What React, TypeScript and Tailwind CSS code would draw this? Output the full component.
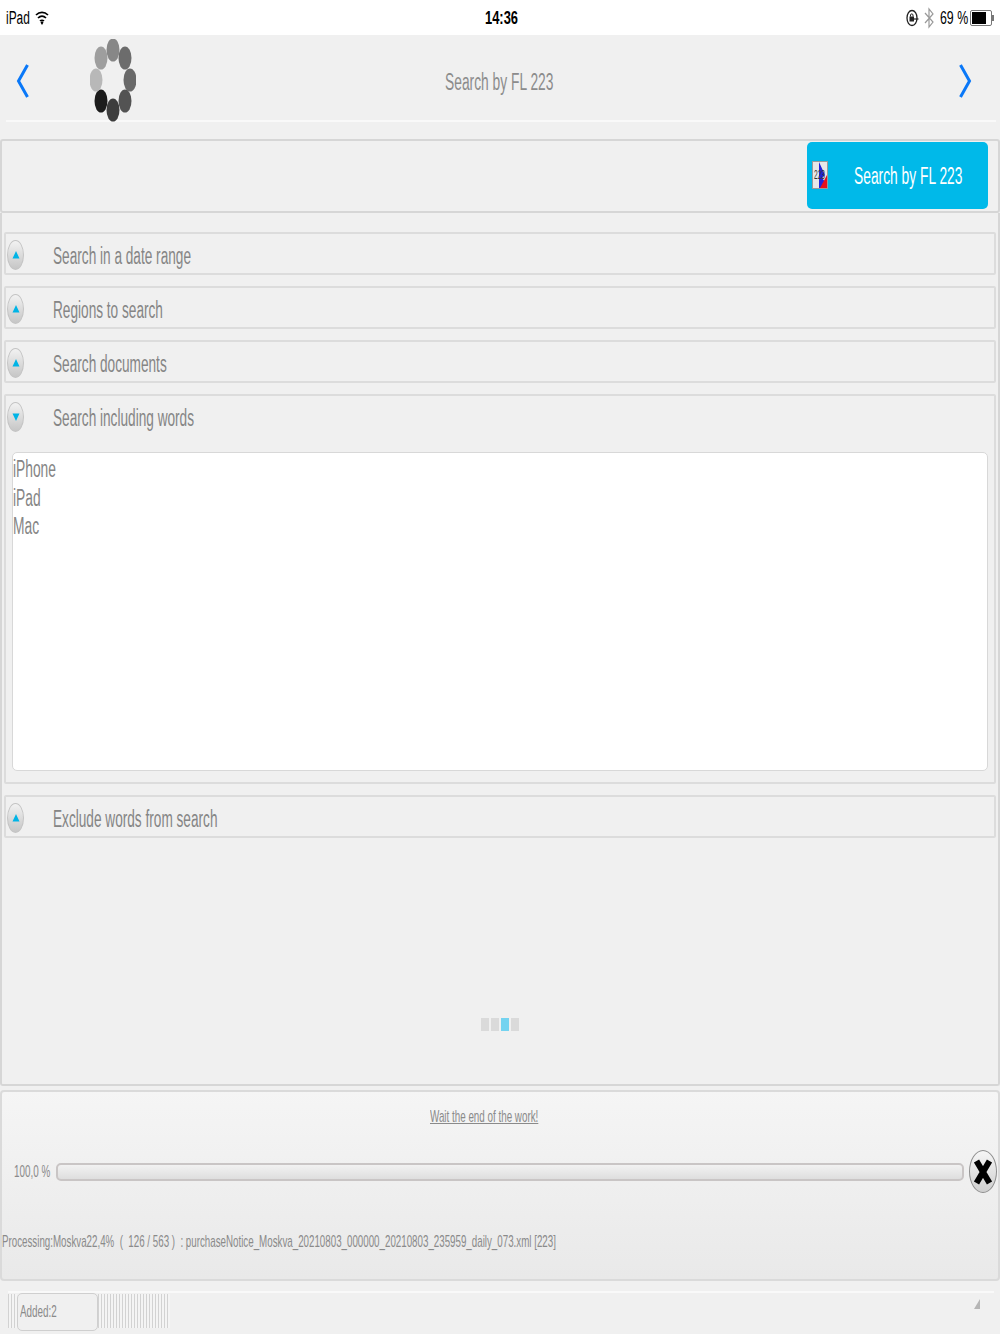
import type { ReactNode } from 'react';

const Squeezed = ({ children, scale = 'scale-x-[0.6]', className = '' }: { children: ReactNode; scale?: string; className?: string }) => (
  <span className={`inline-block whitespace-nowrap origin-left ${scale} ${className}`}>{children}</span>
);

const ArrowButton = ({ open = false }: { open?: boolean }) => (
  <div className="mt-[2px] w-[17px] h-[30px] rounded-[50%] border border-[#c4c4c4] bg-gradient-to-b from-[#f2f2f2] to-[#c6c6c6] flex items-center justify-center shrink-0">
    <svg width="8" height="10" viewBox="0 0 8 10">
      <path d={open ? 'M0.5 1.5H7.5L4 9Z' : 'M4 1L7.5 8.5H0.5Z'} fill="#00b4e6" />
    </svg>
  </div>
);

const AccordionHeader = ({ title, open }: { title: string; open?: boolean }) => (
  <div className="h-[40px] pl-[1px] flex items-center">
    <ArrowButton open={open} />
    <div className="ml-[29px] text-[23px] leading-none text-[#858585] w-[300px] mt-[5px]">
      <Squeezed scale="scale-x-[0.593]">{title}</Squeezed>
    </div>
  </div>
);

const Row = ({ title }: { title: string }) => (
  <div className="h-[43px] border-2 border-[#dcdcdc] rounded-[2px]">
    <AccordionHeader title={title} />
  </div>
);

const spinnerDots = [
  { x: 23, y: 11, fill: '#878787' },
  { x: 35, y: 19, fill: '#6c6c6c' },
  { x: 40, y: 41, fill: '#696969' },
  { x: 35, y: 62, fill: '#535353' },
  { x: 23, y: 71, fill: '#3d3d3d' },
  { x: 11, y: 62, fill: '#1c1c1c' },
  { x: 6, y: 41, fill: '#b8b8b8' },
  { x: 11, y: 19, fill: '#9e9e9e' },
];

const Spinner = () => (
  <svg width="46" height="84" viewBox="0 0 46 84" className="block">
    {spinnerDots.map((d, i) => (
      <ellipse key={i} cx={d.x} cy={d.y} rx="6.5" ry="11.5" fill={d.fill} />
    ))}
  </svg>
);

const Chevron = ({ dir }: { dir: 'left' | 'right' }) => (
  <svg width="14" height="36" viewBox="0 0 14 36" className="block">
    <path d={dir === 'left' ? 'M11.5 2L2.5 18L11.5 34' : 'M2.5 2L11.5 18L2.5 34'} fill="none" stroke="#0a78f8" strokeWidth="3" />
  </svg>
);

const Flag = () => (
  <svg width="16" height="28" viewBox="0 0 16 28" className="block shrink-0">
    <rect x="0.5" y="0.5" width="15" height="27" fill="#e8e8e8" stroke="#9a9a9a" />
    <path d="M7 1L13 14L10 17L14 22L9 27H7Z" fill="#2323d8" />
    <path d="M15 14V27H8Z" fill="#e8101c" />
    <text transform="translate(2 18) scale(0.55 1)" fontSize="12" fill="#333" fontFamily="Liberation Sans, sans-serif">223</text>
  </svg>
);

const Stripes = ({ count }: { count: number }) => (
  <div className="flex h-[34px]">
    {Array.from({ length: count }).map((_, i) => (
      <div key={i} className="w-[3px] border-l border-[#d2d2d2] bg-[#f4f4f4]" />
    ))}
  </div>
);

export default function App() {
  const sans = "font-['Liberation_Sans',Arial,sans-serif]";
  return (
    <div className={`w-[1000px] h-[1334px] overflow-hidden bg-[#f0f0f0] flex flex-col ${sans}`}>
      {/* status bar */}
      <div className="h-[35px] bg-white flex items-center justify-between shrink-0 relative">
        <div className="flex items-center pl-[6px] w-[200px]">
          <div className="w-[29px] text-[18px] leading-none text-black"><Squeezed scale="scale-x-[0.66]">iPad</Squeezed></div>
          <svg width="14" height="16" viewBox="0 0 14 16">
            <path d="M1 5C4.5 1.5 9.5 1.5 13 5M3 8C5.5 5.5 8.5 5.5 11 8M5 11C6 10 8 10 9 11" fill="none" stroke="#000" strokeWidth="1.7" />
            <path d="M5.5 12.5L7 11L8.5 12.5L7 15Z" fill="#000" />
          </svg>
        </div>
        <div className="text-[19px] leading-none text-black font-semibold w-[33px] ml-[3px]"><Squeezed scale="scale-x-[0.68]">14:36</Squeezed></div>
        <div className="flex items-center justify-end w-[200px] pr-[6px]">
          <svg width="13" height="18" viewBox="0 0 13 18">
            <ellipse cx="6" cy="9" rx="5" ry="7.5" fill="none" stroke="#222" strokeWidth="1.3" />
            <rect x="3.5" y="7.5" width="4.5" height="5" fill="#222" />
            <path d="M4.5 7.5V6C4.5 4.5 7 4.5 7 6V7.5" fill="none" stroke="#222" />
            <path d="M8 10H12.5" stroke="#222" strokeWidth="1.2" />
          </svg>
          <svg width="10" height="22" viewBox="0 0 10 22" className="ml-[5px]">
            <path d="M1 6L9 15L5 20V2L9 7L1 16" fill="none" stroke="#999" strokeWidth="1.2" />
          </svg>
          <div className="ml-[6px] w-[30px] text-[19px] leading-none text-black"><Squeezed scale="scale-x-[0.65]">69 %</Squeezed></div>
          <div className="w-[22px] h-[16px] border border-[#777] rounded-[2px] p-px">
            <div className="w-[14px] h-full bg-black" />
          </div>
          <div className="w-[2px] h-[6px] bg-[#777]" />
        </div>
      </div>

      {/* nav bar */}
      <div className="h-[87px] shrink-0 ml-[6px] mr-[4px] border-b-2 border-[#f9f9f9] flex items-center relative">
        <div className="ml-[10px] w-[14px] mt-[6px]"><Chevron dir="left" /></div>
        <div className="ml-[60px] w-[46px] mt-[7px]"><Spinner /></div>
        <div className="flex-1 text-[23px] leading-none text-[#8c8c8c] ml-[309px] mt-[10px]">
          <Squeezed>Search by FL 223</Squeezed>
        </div>
        <div className="mr-[24px] w-[14px] mt-[6px]"><Chevron dir="right" /></div>
      </div>

      {/* toolbar */}
      <div className="h-[74px] shrink-0 mt-[17px] border-2 border-[#d6d6d6] rounded-[3px] flex items-center justify-end pr-[10px]">
        <div className="w-[181px] h-[67px] mb-[2px] bg-[#00b9e9] rounded-[5px] flex items-center pl-[5px]">
          <Flag />
          <div className="ml-[26px] mt-[2px] text-[23px] leading-none text-white w-[110px]"><Squeezed>Search by FL 223</Squeezed></div>
        </div>
      </div>

      {/* search options */}
      <div className="h-[873px] shrink-0 border-2 border-t-0 border-[#d6d6d6] rounded-b-[3px] pt-[19px] pl-[2px] pr-[2px] flex flex-col">
        <div className="flex flex-col gap-[11px]">
          <Row title="Search in a date range" />
          <Row title="Regions to search" />
          <Row title="Search documents" />
          <div className="h-[390px] border-2 border-[#dcdcdc] rounded-[2px]">
            <AccordionHeader title="Search including words" open />
            <div className="mt-[16px] ml-[6px] mr-[6px] h-[319px] bg-white border border-[#d8d8d8] rounded-[5px] text-[23px] leading-[28.5px] text-[#858585] pt-[2px]">
              <div><Squeezed>iPhone</Squeezed></div>
              <div><Squeezed>iPad</Squeezed></div>
              <div><Squeezed>Mac</Squeezed></div>
            </div>
          </div>
          <Row title="Exclude words from search" />
        </div>
        <div className="mt-[180px] flex justify-center gap-[2px]">
          <div className="w-[8px] h-[13px] bg-[#dadada]" />
          <div className="w-[8px] h-[13px] bg-[#dadada]" />
          <div className="w-[8px] h-[13px] bg-[#74d3f0]" />
          <div className="w-[8px] h-[13px] bg-[#dadada]" />
        </div>
      </div>

      {/* progress panel */}
      <div className="h-[191px] shrink-0 mt-[4px] border-2 border-[#dadada] rounded-[4px] bg-gradient-to-b from-[#f5f5f5] to-[#e9e9e9] flex flex-col">
        <div className="mt-[15px] pl-[428px] text-[17px] leading-[20px] text-[#8a8a8a]">
          <Squeezed scale="scale-x-[0.578]" className="underline">Wait the end of the work!</Squeezed>
        </div>
        <div className="mt-[23px] flex items-center pl-[12px]">
          <div className="w-[42px] text-[17px] leading-none text-[#8a8a8a]"><Squeezed scale="scale-x-[0.58]">100,0 %</Squeezed></div>
          <div className="w-[908px] h-[18px] border-2 border-[#c9c5c5] rounded-[5px] bg-gradient-to-b from-[#f2f2f2] to-[#dedede]" />
          <div className="ml-[5px] w-[28px] h-[43px] rounded-[50%] border border-[#8f8f8f] bg-gradient-to-b from-[#f6f6f6] to-[#cfcfcf] flex items-center justify-center">
            <svg width="20" height="28" viewBox="0 0 20 28">
              <path d="M3.5 3L16.5 25M16.5 3L3.5 25" fill="none" stroke="#000" strokeWidth="6" />
            </svg>
          </div>
        </div>
        <div className="mt-[39px] text-[17px] leading-[20px] text-[#8a8a8a]">
          <Squeezed scale="scale-x-[0.574]">Processing:Moskva22,4% &nbsp;( &nbsp;126 / 563 ) &nbsp;: purchaseNotice_Moskva_20210803_000000_20210803_235959_daily_073.xml [223]</Squeezed>
        </div>
      </div>

      {/* footer */}
      <div className="mt-[10px] ml-[8px] mr-[6px] border-t-2 border-[#f9f9f9] flex-1 flex items-start relative">
        <div className="flex items-start pt-[1px]">
          <Stripes count={3} />
          <div className="w-[81px] h-[38px] -mt-px border border-[#cfcfcf] rounded-[5px] flex items-center pl-[2px] pb-[2px] text-[17px] leading-none text-[#8a8a8a] shrink-0">
            <Squeezed scale="scale-x-[0.58]">Added:2</Squeezed>
          </div>
          <Stripes count={24} />
        </div>
        <svg width="7" height="11" viewBox="0 0 7 11" className="absolute right-[13px] top-[6px]">
          <path d="M6 0V10H0Z" fill="#b5b5b5" />
        </svg>
      </div>
    </div>
  );
}
